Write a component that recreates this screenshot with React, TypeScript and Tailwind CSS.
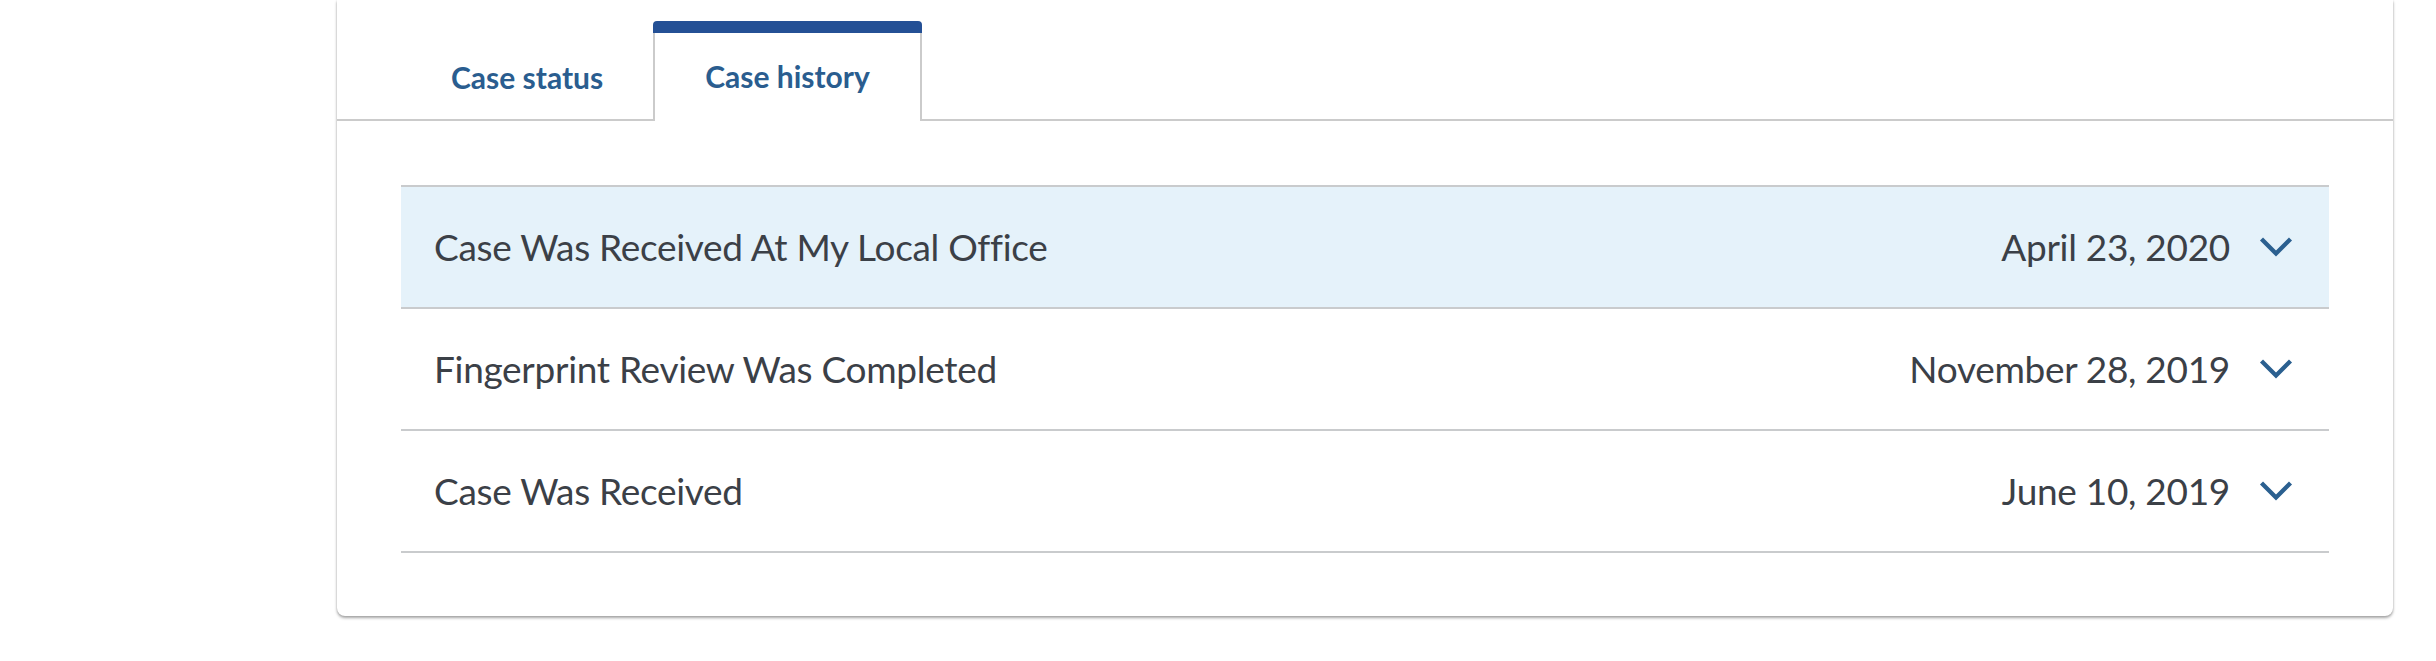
import React from "react";

const rows = [
  { title: "Case Was Received At My Local Office", date: "April 23, 2020", active: true },
  { title: "Fingerprint Review Was Completed", date: "November 28, 2019", active: false },
  { title: "Case Was Received", date: "June 10, 2019", active: false },
];

function Chevron() {
  return (
    <svg width="34" height="22" viewBox="0 0 34 22" className="shrink-0">
      <polyline points="2.5,3 17,17.5 31.5,3" fill="none" stroke="#2b6090" strokeWidth="4.3" />
    </svg>
  );
}

export default function App() {
  return (
    <div className="min-h-[661px] bg-white" style={{ fontFamily: "Lato, 'Noto Sans', sans-serif" }}>
      <div className="ml-[337px] w-[2056px] bg-white rounded-b-[8px] shadow-[0_2px_3px_rgba(0,0,0,0.35),0_0_2px_rgba(0,0,0,0.12)] pb-[63px]">
        {/* Tabs */}
        <div className="h-[121px] pt-[23px] border-b-2 border-[#cbcbcb] flex items-end pl-[64px]">
          <div className="h-[98px] px-[50px] flex items-center pb-[2px] text-[30px] font-bold text-[#2a5d8f] -mb-[2px] pt-[12px]">
            Case status
          </div>
          <div className="h-[100px] -mb-[2px] bg-white flex flex-col">
            <div className="h-[12px] bg-[#245095] rounded-t-[4px]" />
            <div className="flex-1 px-[50px] flex items-center border-x-2 border-[#cbcbcb] text-[30px] font-bold text-[#2a5d8f] pb-[2px]">
              Case history
            </div>
          </div>
        </div>
        {/* Rows */}
        <div className="mt-[64px] mx-[64px] border-t-2 border-[#c9cbcd]">
          {rows.map((r) => (
            <div
              key={r.title}
              className={`h-[122px] border-b-2 border-[#c9cbcd] flex items-center justify-between pl-[33px] pr-[36px] text-[37px] tracking-[-0.3px] text-[#3b4047] ${
                r.active ? "bg-[#e5f2fa]" : "bg-white"
              }`}
            >
              <span>{r.title}</span>
              <div className="flex items-center gap-[29px]">
                <span>{r.date}</span>
                <Chevron />
              </div>
            </div>
          ))}
        </div>
      </div>
    </div>
  );
}
